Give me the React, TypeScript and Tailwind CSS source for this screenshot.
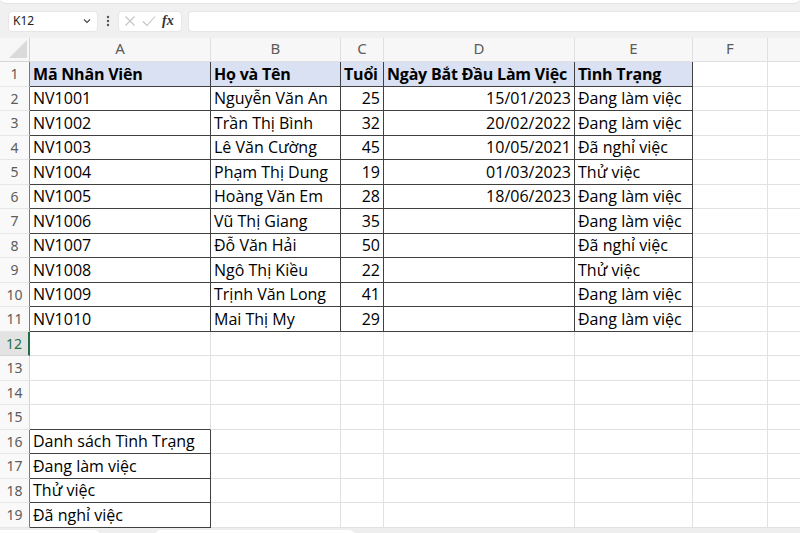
import React from "react";

const cols = [
  { key: "A", w: 181 },
  { key: "B", w: 130 },
  { key: "C", w: 43 },
  { key: "D", w: 191 },
  { key: "E", w: 118 },
  { key: "F", w: 75 },
  { key: "", w: 100 },
];

const data: string[][] = [
  ["Mã Nhân Viên", "Họ và Tên", "Tuổi", "Ngày Bắt Đầu Làm Việc", "Tình Trạng"],
  ["NV1001", "Nguyễn Văn An", "25", "15/01/2023", "Đang làm việc"],
  ["NV1002", "Trần Thị Bình", "32", "20/02/2022", "Đang làm việc"],
  ["NV1003", "Lê Văn Cường", "45", "10/05/2021", "Đã nghỉ việc"],
  ["NV1004", "Phạm Thị Dung", "19", "01/03/2023", "Thử việc"],
  ["NV1005", "Hoàng Văn Em", "28", "18/06/2023", "Đang làm việc"],
  ["NV1006", "Vũ Thị Giang", "35", "", "Đang làm việc"],
  ["NV1007", "Đỗ Văn Hải", "50", "", "Đã nghỉ việc"],
  ["NV1008", "Ngô Thị Kiều", "22", "", "Thử việc"],
  ["NV1009", "Trịnh Văn Long", "41", "", "Đang làm việc"],
  ["NV1010", "Mai Thị My", "29", "", "Đang làm việc"],
];

const list = ["Danh sách Tình Trạng", "Đang làm việc", "Thử việc", "Đã nghỉ việc"];

function cellText(r: number, c: number): string {
  if (r >= 1 && r <= 11) return c < 5 ? data[r - 1][c] : "";
  if (r >= 16 && r <= 19 && c === 0) return list[r - 16];
  return "";
}

function inTable(r: number, c: number) {
  return (r >= 1 && r <= 11 && c <= 4) || (r >= 16 && r <= 19 && c === 0);
}

export default function App() {
  const rows = Array.from({ length: 19 }, (_, i) => i + 1);
  return (
    <div
      className="w-[800px] h-[533px] overflow-hidden bg-[#f0f0f0] flex flex-col"
      style={{ fontFamily: "'Open Sans', 'Noto Sans', sans-serif" }}
    >
      {/* ribbon bottom edge */}
      <div className="h-[10px] shrink-0 relative">
        <div className="absolute left-[0px] right-[0px] top-[-6px] h-[10px] bg-white rounded-b-[6px] border-b border-[#e4e4e4]" />
      </div>
      {/* formula bar */}
      <div className="h-[22px] shrink-0 flex items-center pl-[8px]">
        <div className="w-[90px] h-[21px] bg-white rounded-[4px] border border-[#e6e6e6] flex items-center justify-between pl-[4px] pr-[4px]">
          <span className="text-[12px] text-[#222]" style={{ fontFamily: "'Noto Sans', sans-serif" }}>K12</span>
          <svg width="10" height="10" viewBox="0 0 10 10" className="mr-[1px]">
            <path d="M2 3.5 L5 6.5 L8 3.5" stroke="#444" strokeWidth="1.1" fill="none" />
          </svg>
        </div>
        <div className="w-[20px] flex items-center justify-center">
          <svg width="4" height="12" viewBox="0 0 4 12">
            <circle cx="2" cy="2" r="1.2" fill="#555" />
            <circle cx="2" cy="6" r="1.2" fill="#555" />
            <circle cx="2" cy="10" r="1.2" fill="#555" />
          </svg>
        </div>
        <div className="w-[64px] h-[21px] bg-white rounded-[4px] border border-[#e6e6e6] flex items-center pl-[5px] gap-[6px]">
          <svg width="12" height="12" viewBox="0 0 12 12">
            <path d="M1.5 1.5 L10.5 10.5 M10.5 1.5 L1.5 10.5" stroke="#c4c4c4" strokeWidth="1.1" />
          </svg>
          <svg width="14" height="12" viewBox="0 0 14 12">
            <path d="M1 6.5 L5 10.5 L13 1.5" stroke="#c4c4c4" strokeWidth="1.1" fill="none" />
          </svg>
          <span
            className="text-[14px] italic text-[#333] leading-none font-bold"
            style={{ fontFamily: "'Liberation Serif', 'DejaVu Serif', serif" }}
          >
            fx
          </span>
        </div>
        <div className="ml-[6px] flex-1 h-[21px] bg-white rounded-l-[4px] border border-r-0 border-[#e6e6e6]" />
      </div>
      <div className="h-[6px] shrink-0" />
      {/* sheet */}
      <div className="bg-white shrink-0">
        <div
          className="grid"
          style={{ gridTemplateColumns: `30px ${cols.map((c) => c.w + "px").join(" ")}` }}
        >
          {/* column headers */}
          <div className="h-[24px] bg-[#f7f7f7] border-r border-b border-[#d4d4d4] relative">
            <svg width="18" height="18" viewBox="0 0 18 18" className="absolute right-[2px] bottom-[3px]">
              <path d="M18 0 L18 18 L0 18 Z" fill="#dadada" />
            </svg>
          </div>
          {cols.map((c, i) => (
            <div
              key={i}
              className="h-[24px] bg-[#f7f7f7] border-r border-b border-[#e0e0e0] flex items-center justify-center pb-[2px] text-[15px] text-[#5c5c5c]"
              style={{ fontFamily: "'Noto Sans', sans-serif" }}
            >
              {c.key}
            </div>
          ))}
          {rows.map((r) => {
            const rowInTable = (r >= 1 && r <= 11) || (r >= 16 && r <= 19);
            const sel = r === 12;
            return (
              <React.Fragment key={r}>
                <div
                  className={`h-[24.5px] flex items-center justify-center text-[14px] border-b ${
                    sel
                      ? "bg-[#e3e3e3] text-[#1e7145] border-r-2 border-r-[#1e7145] border-b-[#d4d4d4]"
                      : "bg-[#f9f9f9] text-[#5c5c5c] border-r border-b-[#e6e6e6] " +
                        (rowInTable ? "border-r-[#7a7a7a]" : "border-r-[#d4d4d4]")
                  }`}
                  style={{ fontFamily: "'Noto Sans', sans-serif" }}
                >
                  {r}
                </div>
                {cols.map((c, ci) => {
                  const t = cellText(r, ci);
                  const tab = inTable(r, ci);
                  const belowIsTable = inTable(r + 1, ci);
                  const rightIsTable = inTable(r, ci + 1);
                  const header = r === 1 && ci <= 4;
                  const right = r >= 2 && r <= 11 && (ci === 2 || ci === 3);
                  const rColor = tab || rightIsTable ? "border-r-[#404040]" : "border-r-[#e1e1e1]";
                  const bColor = tab || belowIsTable ? "border-b-[#404040]" : "border-b-[#e1e1e1]";
                  return (
                    <div
                      key={ci}
                      className={`h-[24.5px] border-r border-b ${rColor} ${bColor} flex items-center px-[3px] whitespace-nowrap overflow-visible text-[16px] leading-none text-black ${
                        header ? "bg-[#d9e1f2] font-bold tracking-[-0.2px]" : ""
                      } ${right ? "justify-end" : ""}`}
                    >
                      {t}
                    </div>
                  );
                })}
              </React.Fragment>
            );
          })}
        </div>
      </div>
      {/* sheet tabs strip */}
      <div className="flex-1 bg-[#eeeeee] flex items-start pt-[2px]">
        <div className="w-[100px] h-[10px] bg-white rounded-tr-[6px]" />
        <div className="ml-[55px] w-[200px] h-[10px] bg-white rounded-t-[6px]" />
      </div>
    </div>
  );
}
